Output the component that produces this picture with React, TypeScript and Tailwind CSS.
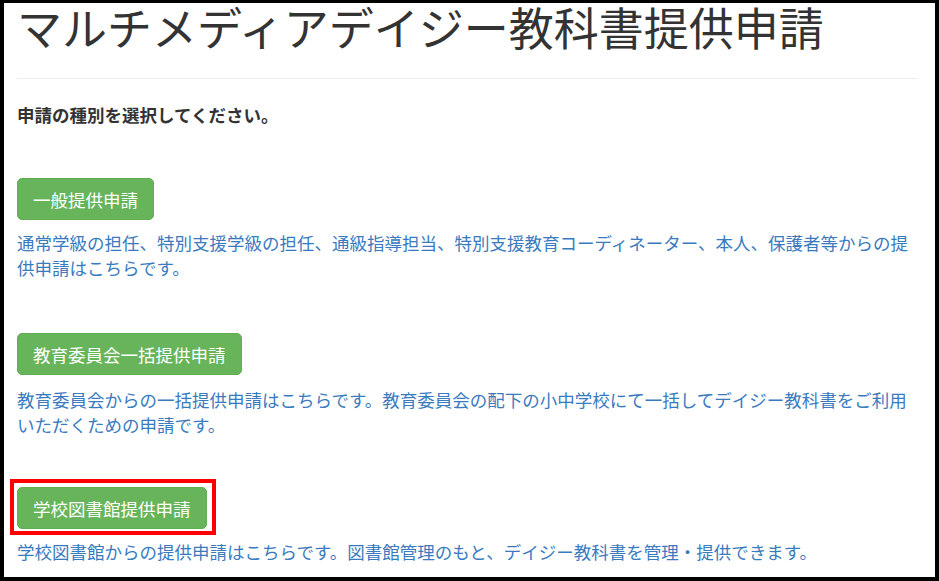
const sections = [
  {
    label: "一般提供申請",
    text: "通常学級の担任、特別支援学級の担任、通級指導担当、特別支援教育コーディネーター、本人、保護者等からの提供申請はこちらです。",
  },
  {
    label: "教育委員会一括提供申請",
    text: "教育委員会からの一括提供申請はこちらです。教育委員会の配下の小中学校にて一括してデイジー教科書をご利用いただくための申請です。",
  },
  {
    label: "学校図書館提供申請",
    text: "学校図書館からの提供申請はこちらです。図書館管理のもと、デイジー教科書を管理・提供できます。",
  },
];

function GreenButton({ label }: { label: string }) {
  return (
    <button className="flex h-[42px] items-center rounded-[5px] border border-[#5fae52] bg-[#67b45b] px-[15px] text-[17.5px] leading-[25px] text-white">
      {label}
    </button>
  );
}

export default function App() {
  return (
    <div
      className="h-[581px] w-[939px] overflow-hidden border-x-4 border-t-[3px] border-b-4 border-black bg-white pl-[13px] pr-[17px] text-[#333]"
      style={{ fontFamily: '"Noto Sans CJK JP", "Noto Sans", sans-serif' }}
    >
      <h1 className="pt-[1px] text-[45px] leading-[45px] font-normal whitespace-nowrap">
        マルチメディアデイジー教科書提供申請
      </h1>
      <hr className="mt-[29px] border-t border-[#eee]" />

      <p className="mt-[23px] text-[17.5px] leading-[25px] font-bold">
        申請の種別を選択してください。
      </p>

      <div className="mt-[51px]">
        <GreenButton label={sections[0].label} />
        <p className="mt-[10px] text-[17.5px] leading-[25px] text-[#3a7bbf]">{sections[0].text}</p>
      </div>

      <div className="mt-[53px]">
        <GreenButton label={sections[1].label} />
        <p className="mt-[12px] text-[17.5px] leading-[25px] text-[#3a7bbf]">{sections[1].text}</p>
      </div>

      <div className="mt-[50px]">
        <div className="relative w-fit">
          <GreenButton label={sections[2].label} />
          <div className="absolute -top-[8px] -left-[7px] h-[56px] w-[206px] border-4 border-[#ff0000]" />
        </div>
        <p className="mt-[10px] text-[17.5px] leading-[25px] text-[#3a7bbf]">{sections[2].text}</p>
      </div>
    </div>
  );
}
